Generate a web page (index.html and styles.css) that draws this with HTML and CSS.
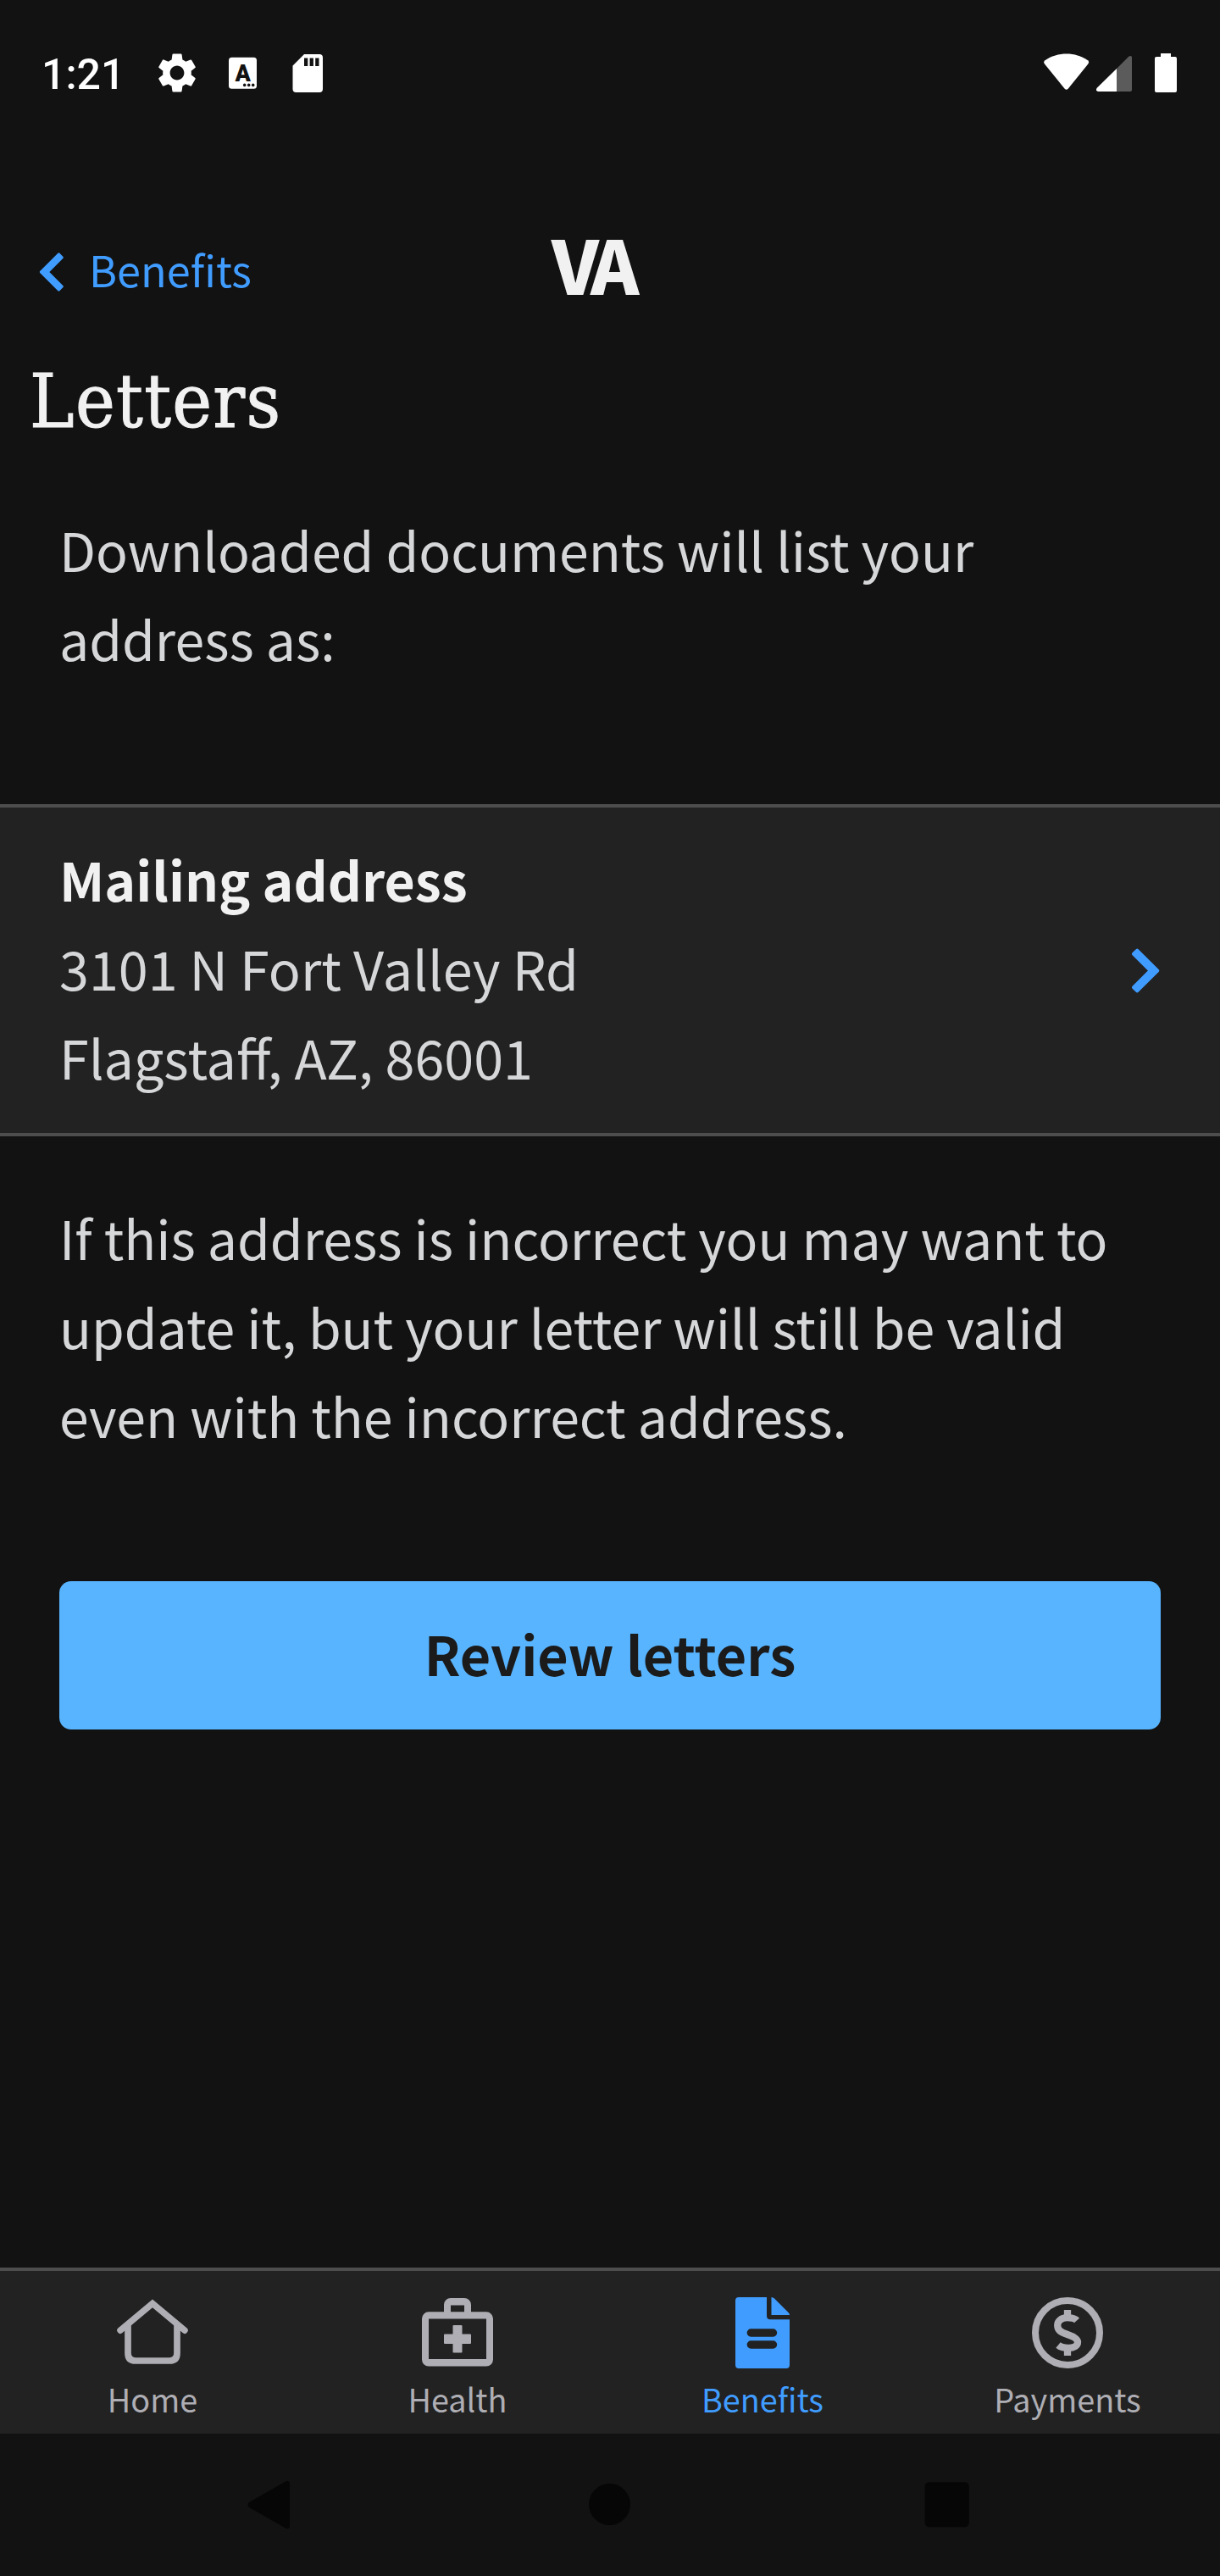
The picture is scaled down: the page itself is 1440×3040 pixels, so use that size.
FILE: index.html
```html
<!DOCTYPE html>
<html lang="en">
<head>
<meta charset="utf-8">
<title>Letters</title>
<link rel="stylesheet" href="styles.css">
</head>
<body>
<div class="screen">
  <div class="status-bar">
    <span class="clock">1:21</span>
    <div class="status-left">
      <svg width="56" height="56" viewBox="0 0 24 24"><path fill="#fff" d="M19.14 12.94c.04-.3.06-.61.06-.94 0-.32-.02-.64-.07-.94l2.03-1.58c.18-.14.23-.41.12-.61l-1.92-3.32c-.12-.22-.37-.29-.59-.22l-2.39.96c-.5-.38-1.03-.7-1.62-.94l-.36-2.54c-.04-.24-.24-.41-.48-.41h-3.84c-.24 0-.43.17-.47.41l-.36 2.54c-.59.24-1.13.57-1.62.94l-2.39-.96c-.22-.08-.47 0-.59.22L2.74 8.87c-.12.21-.08.47.12.61l2.03 1.58c-.05.3-.09.63-.09.94s.02.64.07.94l-2.03 1.58c-.18.14-.23.41-.12.61l1.92 3.32c.12.22.37.29.59.22l2.39-.96c.5.38 1.03.7 1.62.94l.36 2.54c.05.24.24.41.48.41h3.84c.24 0 .44-.17.47-.41l.36-2.54c.59-.24 1.13-.56 1.62-.94l2.39.96c.22.08.47 0 .59-.22l1.92-3.32c.12-.22.07-.47-.12-.61l-2.01-1.58zM12 15.6c-1.98 0-3.6-1.62-3.6-3.6s1.62-3.6 3.6-3.6 3.6 1.62 3.6 3.6-1.62 3.6-3.6 3.6z"/></svg>
      <svg width="34" height="46" viewBox="0 0 34 46"><rect x="0" y="4.7" width="33" height="37" rx="3.5" fill="#fff"/><text class="badge-letter" x="16.6" y="32.6">A</text><g fill="#121212"><circle cx="18.7" cy="37.4" r="1.8"/><circle cx="23.7" cy="37.4" r="1.8"/><circle cx="28.7" cy="37.4" r="1.8"/></g></svg>
      <svg width="36" height="46" viewBox="0 0 36 46"><path fill="#fff" fill-rule="evenodd" d="M14 1H32a4 4 0 0 1 4 4V42a4 4 0 0 1-4 4H4.500a4 4 0 0 1-4-4V14.500zM14 5.500v9.500h4.300V5.500zM20.600 5.500v9.500h4.300V5.500zM27.200 5.500v9.500h4.300V5.500z"/></svg>
    </div>
    <div class="status-right">
      <svg width="54" height="46" viewBox="0 0 54 46"><path fill="#fff" d="M1 12.500Q-.8 10 1.500 8.300C16-2 38-2 52 8.300Q54 10 52.300 12.500L28.700 41.800Q26.700 43.800 24.700 41.800z"/></svg>
      <svg width="42" height="46" viewBox="0 0 42 46"><path fill="#fff" d="M24 18V45H2Q-1.500 44 1 40.500z"/><path fill="#5b5b5b" d="M24 18L38.500 3.500Q42 2 42 5V43Q42 45 40 45H24z"/></svg>
      <svg width="26" height="46" viewBox="0 0 26 46"><path fill="#fff" d="M7 0H19V4H24a2 2 0 0 1 2 2V44a2 2 0 0 1-2 2H2a2 2 0 0 1-2-2V6a2 2 0 0 1 2-2H7z"/></svg>
    </div>
  </div>

  <header class="header">
    <a class="back">
      <svg width="29" height="46" viewBox="0 0 33 53"><path class="chevron" d="M26.750 2.550L30.950 6.750L11.200 26.500L30.950 46.250L26.750 50.450L2.800 26.500z"/></svg>
      <span>Benefits</span>
    </a>
    <div class="logo">VA</div>
  </header>

  <main class="content">
    <h1 class="title">Letters</h1>
    <p class="text intro">Downloaded documents will list your address as:</p>
    <section class="address">
      <div class="address-lines">
        <strong>Mailing address</strong>
        <span>3101 N Fort Valley Rd</span>
        <span>Flagstaff, AZ, 86001</span>
      </div>
      <svg width="33" height="53" viewBox="0 0 33 53"><path class="chevron" d="M6.250 2.550L2.050 6.750L21.800 26.500L2.050 46.250L6.250 50.450L30.200 26.500z"/></svg>
    </section>
    <p class="text note">If this address is incorrect you may want to update it, but your letter will still be valid even with the incorrect address.</p>
    <button class="primary">Review letters</button>
  </main>

  <nav class="tabs">
    <a class="tab">
      <svg width="84" height="84" viewBox="0 0 84 84" fill="none" stroke="currentColor" stroke-linecap="round"><path stroke-width="7.500" d="M4 39.200L42 7.300L80 39.200"/><path stroke-width="7.700" stroke-linecap="butt" d="M13 32V66Q13 75 22 75H62Q71 75 71 66V32"/></svg>
      <span>Home</span>
    </a>
    <a class="tab">
      <svg width="84" height="84" viewBox="0 0 84 84"><path fill="currentColor" fill-rule="evenodd" d="M26 17.300V9a8 8 0 0 1 8-8H50a8 8 0 0 1 8 8V17.300H76a8 8 0 0 1 8 8V73.500a8 8 0 0 1-8 8H8a8 8 0 0 1-8-8V25.300a8 8 0 0 1 8-8zM34 17.300H50V9.500H34zM8 25.500V73H76V25.500z"/><path fill="currentColor" d="M37.500 33h9a1 1 0 0 1 1 1v9.500H57a1 1 0 0 1 1 1V54a1 1 0 0 1-1 1H47.500v9.500a1 1 0 0 1-1 1h-9a1 1 0 0 1-1-1V55H27a1 1 0 0 1-1-1V44.500a1 1 0 0 1 1-1h9.500V34a1 1 0 0 1 1-1z"/></svg>
      <span>Health</span>
    </a>
    <a class="tab active">
      <svg width="84" height="84" viewBox="0 0 84 84"><path fill="currentColor" fill-rule="evenodd" d="M14 0H47V22Q47 26.300 51.300 26.300H74V80a4 4 0 0 1-4 4H14a4 4 0 0 1-4-4V4a4 4 0 0 1 4-4zM28.300 37.300a4.700 4.700 0 0 0 0 9.400H54.500a4.700 4.700 0 0 0 0-9.400zM28.300 51.300a4.700 4.700 0 0 0 0 9.400H54.500a4.700 4.700 0 0 0 0-9.400z"/><path fill="currentColor" d="M52.500 0Q54.500 0 56 1.500L72.500 18Q74 19.500 74 21H52.500z"/></svg>
      <span>Benefits</span>
    </a>
    <a class="tab">
      <svg width="84" height="84" viewBox="0 0 84 84" fill="none" stroke="currentColor" stroke-width="8"><circle cx="42" cy="42" r="38"/><path stroke-width="8.300" d="M53 27.500C50 24.300 46 24.200 41.500 24.200C34.500 24.200 30.200 28.500 30.200 33C30.200 39 34 41.300 42 44C50 46.700 54 49.500 54 53C54 57 50 59.800 43 59.800C38 59.800 34.500 59.500 31 56.500"/><path stroke-width="8.300" stroke-linejoin="round" d="M42 15V23M42 61V69"/></svg>
      <span>Payments</span>
    </a>
  </nav>

  <div class="system-nav">
    <svg width="60" height="60" viewBox="0 0 60 60"><path d="M51 5V55Q50 60 46 57.500L3 33Q0 30 3 27L46 2.500Q50 0 51 5z"/></svg>
    <svg width="60" height="60" viewBox="0 0 60 60"><circle cx="29.500" cy="29.500" r="24.500"/></svg>
    <svg width="60" height="60" viewBox="0 0 60 60"><rect x="2.500" y="3.300" width="52.300" height="53" rx="5"/></svg>
  </div>
</div>
</body>
</html>
```
FILE: styles.css
```css
* {
  box-sizing: border-box;
}

body {
  margin: 0;
  background: #121212;
}

svg {
  display: block;
  flex: none;
}

.screen {
  width: 1440px;
  height: 3040px;
  display: flex;
  flex-direction: column;
  background: #121212;
  color: #d6d7d9;
  font-family: "Noto Sans CJK SC", "Open Sans", sans-serif;
}

.status-bar {
  height: 172px;
  display: flex;
  align-items: center;
  padding: 0 51px 0 49px;
}

.clock {
  width: 132px;
  color: #fff;
  font: 500 50px/60px Roboto, sans-serif;
  padding-top: 3px;
}

.status-left {
  display: flex;
  align-items: center;
  gap: 33px;
}

.status-left svg:last-child {
  margin-left: 8px;
}

.status-right {
  display: flex;
  margin-left: auto;
}

.status-right svg:nth-child(2) {
  margin: 0 27px 0 8px;
}

.badge-letter {
  font: 900 27px Roboto, sans-serif;
  text-anchor: middle;
  fill: #121212;
}

.header {
  height: 233px;
  display: flex;
  padding: 80px 0 0 46px;
}

.back {
  width: 605px;
  height: 138px;
  display: flex;
  align-items: center;
  gap: 30px;
  color: #409cff;
  font-size: 50.4px;
  line-height: 74px;
}

.back span {
  padding-bottom: 6px;
}

.chevron {
  fill: #409cff;
  stroke: #409cff;
  stroke-width: 4;
  stroke-linejoin: round;
}

.logo {
  color: #f1f1f1;
  font: 900 87px/116px "Noto Sans CJK SC", sans-serif;
  letter-spacing: -8px;
}

.content {
  flex: 1;
  display: flex;
  flex-direction: column;
}

.title {
  margin: 0;
  padding-left: 35px;
  height: 190px;
  color: #f1f1f1;
  font: 400 88px/138px "DejaVu Serif Condensed", "DejaVu Serif", serif;
  font-stretch: condensed;
  letter-spacing: 1.3px;
  -webkit-text-stroke: 1px #f1f1f1;
}

.text {
  margin: 0;
  padding: 0 70px;
  font-size: 62.6px;
  line-height: 105px;
}

.intro {
  margin-bottom: 144px;
}

.address {
  display: flex;
  align-items: center;
  justify-content: space-between;
  height: 392px;
  padding: 0 71px 5px 70px;
  background: #222;
  border: solid #4d4d4d;
  border-width: 4px 0;
  font-size: 62.85px;
  line-height: 105px;
}

.address svg {
  margin-top: 6px;
}

.address-lines {
  display: flex;
  flex-direction: column;
  padding-bottom: 1px;
}

.address-lines strong {
  color: #f1f1f1;
  font-size: 62.5px;
  line-height: 104px;
}

.note {
  margin: 66px 0 144px;
}

.primary {
  height: 175px;
  margin: 0 70px;
  padding: 0 0 6px;
  border: 0;
  border-radius: 14px;
  background: #58b4ff;
  color: #1b1b1b;
  font: 700 62.8px/105px "Noto Sans CJK SC", sans-serif;
}

.tabs {
  display: grid;
  grid-template-columns: repeat(4, 1fr);
  height: 196px;
  padding-top: 31px;
  border-top: 4px solid #4d4d4d;
  background: #222;
}

.tab {
  display: flex;
  flex-direction: column;
  align-items: center;
  gap: 8px;
  color: #aeaeb4;
  font-size: 37.8px;
  line-height: 56px;
}

.tab.active {
  color: #409cff;
}

.system-nav {
  height: 168px;
  display: flex;
  justify-content: center;
  align-items: center;
  gap: 339px;
  fill: #060606;
}
```
